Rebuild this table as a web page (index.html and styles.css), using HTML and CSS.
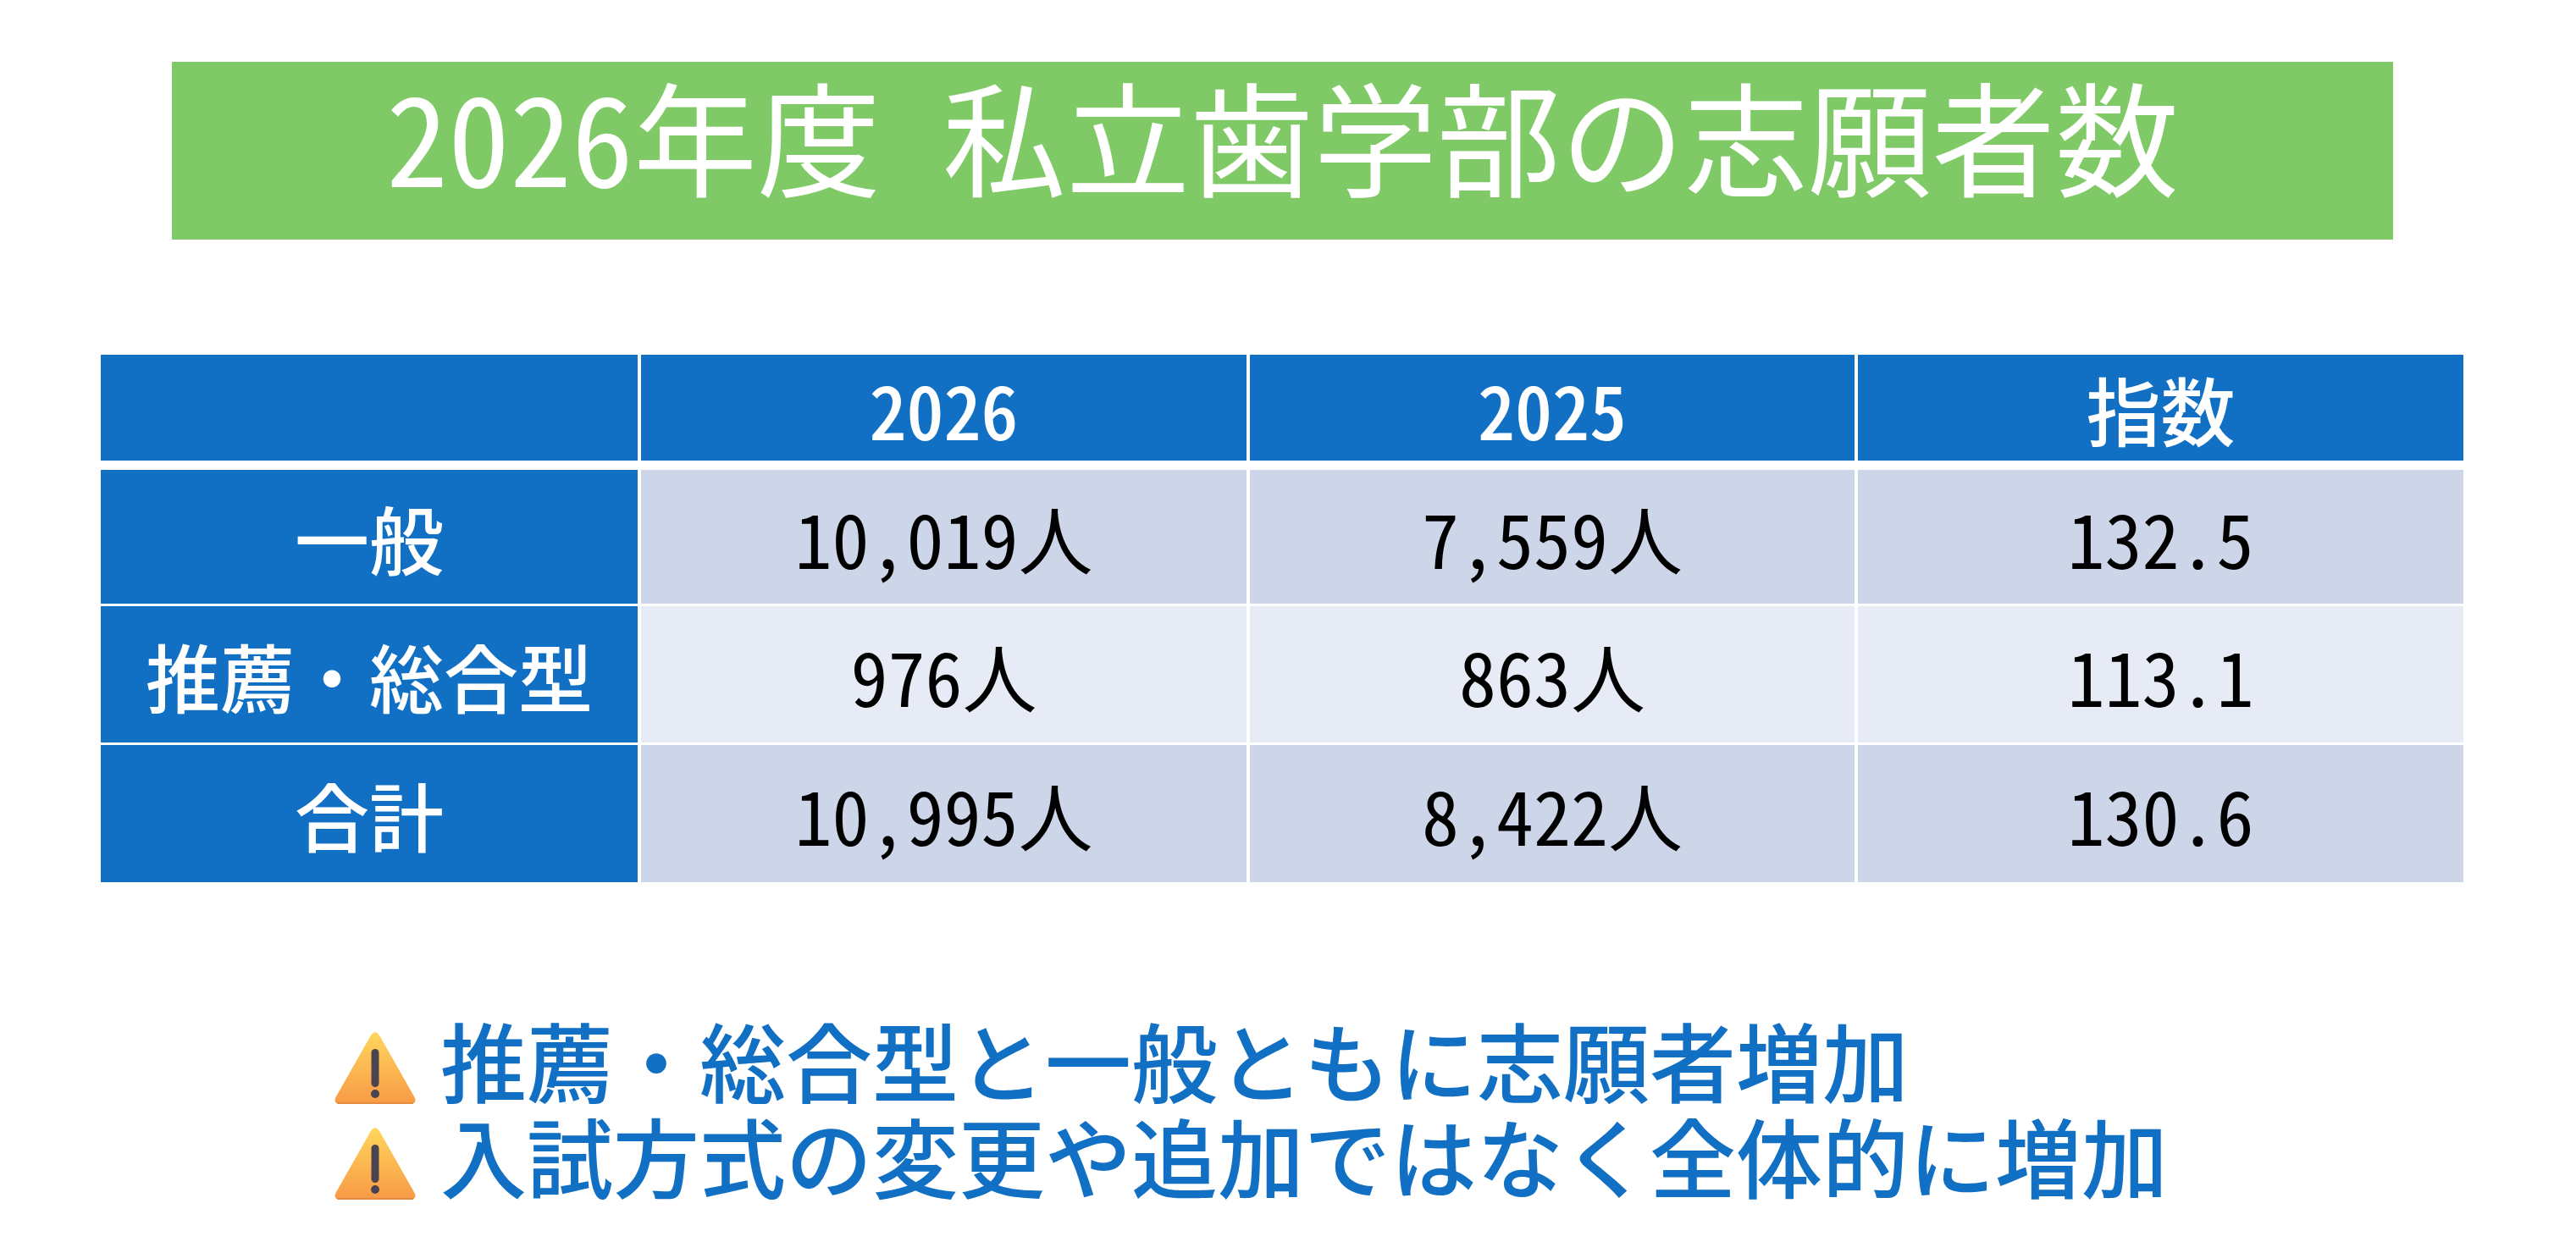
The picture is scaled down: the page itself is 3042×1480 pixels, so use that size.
FILE: index.html
```html
<!DOCTYPE html>
<html lang="ja">
<head>
<meta charset="utf-8">
<title>2026年度 私立歯学部の志願者数</title>
<link rel="stylesheet" href="styles.css">
</head>
<body>
<div class="slide">
  <header class="title-bar">
    <h1 class="title">2026年度 私立歯学部の志願者数</h1>
  </header>

  <div class="table">
    <div class="cell head"></div>
    <div class="cell head">2026</div>
    <div class="cell head">2025</div>
    <div class="cell head">指数</div>

    <div class="cell label">一般</div>
    <div class="cell data dark">10,019人</div>
    <div class="cell data dark">7,559人</div>
    <div class="cell data dark">132.5</div>

    <div class="cell label">推薦・総合型</div>
    <div class="cell data light">976人</div>
    <div class="cell data light">863人</div>
    <div class="cell data light">113.1</div>

    <div class="cell label">合計</div>
    <div class="cell data dark">10,995人</div>
    <div class="cell data dark">8,422人</div>
    <div class="cell data dark">130.6</div>
  </div>

  <ul class="notes">
    <li class="note">
      <svg class="warn" viewBox="0 0 100 90" aria-hidden="true">
        <defs>
          <linearGradient id="warnGrad1" x1="0" y1="0" x2="0" y2="1">
            <stop offset="0" stop-color="#FFD65C"/>
            <stop offset="1" stop-color="#F89A46"/>
          </linearGradient>
        </defs>
        <path d="M44.6 6.5 Q50 -2 55.4 6.5 L96.5 79 Q100 87 91 87 L9 87 Q0 87 3.5 79 Z" fill="url(#warnGrad1)"/>
        <path d="M6 86 L94 86" stroke="#E58A3C" stroke-width="2" stroke-linecap="round"/>
        <rect x="45.5" y="22" width="9" height="45" rx="4.5" fill="#4A4450"/>
        <circle cx="50" cy="75" r="5" fill="#4A4450"/>
      </svg>
      <span class="note-text">推薦・総合型と一般ともに志願者増加</span>
    </li>
    <li class="note">
      <svg class="warn" viewBox="0 0 100 90" aria-hidden="true">
        <defs>
          <linearGradient id="warnGrad2" x1="0" y1="0" x2="0" y2="1">
            <stop offset="0" stop-color="#FFD65C"/>
            <stop offset="1" stop-color="#F89A46"/>
          </linearGradient>
        </defs>
        <path d="M44.6 6.5 Q50 -2 55.4 6.5 L96.5 79 Q100 87 91 87 L9 87 Q0 87 3.5 79 Z" fill="url(#warnGrad2)"/>
        <path d="M6 86 L94 86" stroke="#E58A3C" stroke-width="2" stroke-linecap="round"/>
        <rect x="45.5" y="22" width="9" height="45" rx="4.5" fill="#4A4450"/>
        <circle cx="50" cy="75" r="5" fill="#4A4450"/>
      </svg>
      <span class="note-text">入試方式の変更や追加ではなく全体的に増加</span>
    </li>
  </ul>
</div>
</body>
</html>
```

FILE: styles.css
```css
* {
  box-sizing: border-box;
  margin: 0;
  padding: 0;
}

html, body {
  width: 3042px;
  height: 1480px;
  background: #ffffff;
  overflow: hidden;
}

body {
  font-family: "Noto Sans CJK JP", "Noto Sans", sans-serif;
  font-feature-settings: "hwid" 1;
}

.slide {
  display: flex;
  flex-direction: column;
  align-items: flex-start;
  padding-top: 73px;
}

/* Title */
.title-bar {
  margin-left: 203px;
  width: 2623px;
  height: 210px;
  background: #7FCA66;
  display: flex;
  justify-content: center;
  padding-top: 12px;
}

.title {
  font-size: 146px;
  line-height: 146px;
  font-weight: 400;
  color: #ffffff;
  white-space: nowrap;
}

/* Table */
.table {
  margin-top: 136px;
  margin-left: 119px;
  display: grid;
  grid-template-columns: 634px 715px 714px 715px;
  grid-template-rows: 133px 158px 161px 162px;
  column-gap: 4px;
  row-gap: 3px;
}

.cell {
  display: flex;
  align-items: center;
  justify-content: center;
  font-size: 88px;
  line-height: 1;
  white-space: nowrap;
}

.head {
  height: 125px;
  align-self: start;
  background: #1170C4;
  color: #ffffff;
  font-weight: 500;
}

.label {
  background: #1170C4;
  color: #ffffff;
  font-weight: 500;
}

.data {
  color: #000000;
  font-weight: 400;
}

.dark {
  background: #CDD5E8;
}

.light {
  background: #E6EBF5;
}

/* Notes */
.notes {
  list-style: none;
  margin-top: 162px;
  margin-left: 393px;
  display: flex;
  flex-direction: column;
}

.note {
  display: flex;
  align-items: flex-start;
  height: 113px;
}

.warn {
  width: 100px;
  height: 90px;
  margin-top: 13px;
  margin-right: 27px;
  flex: none;
}

.note-text {
  font-family: "Liberation Serif", "Noto Sans CJK JP", sans-serif;
  font-size: 102px;
  line-height: 113px;
  font-weight: 500;
  color: #1170C4;
  white-space: nowrap;
}
```
